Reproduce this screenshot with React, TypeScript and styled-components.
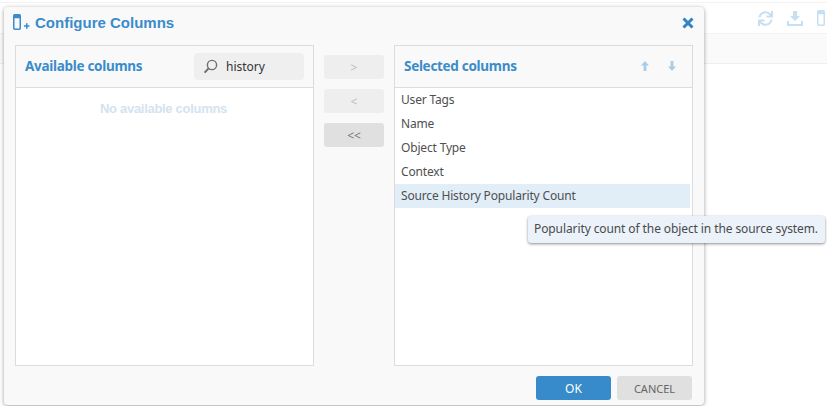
import React from 'react';
import styled, { createGlobalStyle } from 'styled-components';
import { FaSync } from 'react-icons/fa';

const selectedColumns = ['User Tags', 'Name', 'Object Type', 'Context', 'Source History Popularity Count'];

const GlobalStyle = createGlobalStyle`
  html, body {
    margin: 0;
    padding: 0;
    background: #fff;
  }
  body {
    font-family: 'Noto Sans', 'Open Sans', sans-serif;
    font-size: 12px;
    color: #4a4a4a;
  }
  * {
    box-sizing: border-box;
  }
`;

const Page = styled.div`
  position: relative;
  width: 827px;
  height: 406px;
  overflow: hidden;
  padding-top: 2px;
`;

const Toolbar = styled.div`
  display: flex;
  justify-content: flex-end;
  align-items: center;
  gap: 14px;
  height: 32px;
  border-top: 1px solid #f3f3f3;
  border-bottom: 1px solid #f3f3f3;
  padding: 0 2px 0 0;
  color: #c6dff2;
`;

const HeaderStrip = styled.div`
  height: 30px;
  background: #fafafa;
  border-bottom: 1px solid #eeeeee;
`;

const Modal = styled.div`
  position: absolute;
  left: 4px;
  top: 7px;
  width: 700px;
  height: 398px;
  background: #f9f9f9;
  border-radius: 4px;
  box-shadow: 0 1px 4px rgba(0, 0, 0, 0.38);
  padding: 0 11px;
  display: flex;
  flex-direction: column;
`;

const TitleRow = styled.div`
  height: 38px;
  display: flex;
  align-items: center;
  justify-content: space-between;
  padding: 0 0 8px 0;
  margin-left: -2px;
`;

const TitleGroup = styled.div`
  display: flex;
  align-items: center;
  gap: 5px;
`;

const Title = styled.h2`
  margin: 0;
  font-family: 'Liberation Sans', Arial, sans-serif;
  font-size: 15px;
  font-weight: 700;
  color: #3a8cca;
`;

const CloseIcon = styled.svg`
  width: 12px;
  height: 12px;
  margin-right: -1px;
  margin-top: 2px;
  color: #2f84c4;
`;

const Columns = styled.div`
  display: flex;
  align-items: stretch;
  height: 321px;
  width: 678px;
`;

const Panel = styled.section`
  width: 299px;
  border: 1px solid #dcdcdc;
  display: flex;
  flex-direction: column;
`;

const PanelHeader = styled.header`
  height: 42px;
  flex: none;
  display: flex;
  align-items: center;
  justify-content: space-between;
  border-bottom: 1px solid #dcdcdc;
  padding: 0 9px;
`;

const PanelTitle = styled.h3`
  margin: 0 0 2px;
  font-family: 'Noto Sans', sans-serif;
  font-size: 13.5px;
  font-weight: 700;
  letter-spacing: -0.3px;
  color: #3a8cca;
`;

const SearchBox = styled.div`
  width: 110px;
  height: 27px;
  border-radius: 4px;
  background: #efefef;
  display: flex;
  align-items: center;
  gap: 8px;
  padding-left: 9px;
  font-size: 12px;
  color: #333;
`;

const SortGroup = styled.div`
  display: flex;
  gap: 19px;
  padding: 0 7px 2px 0;
  color: #a9cde9;
`;

const PanelBody = styled.div`
  flex: 1;
  background: #fff;
  padding-right: 2px;
`;

const EmptyNote = styled.div`
  text-align: center;
  padding-top: 12px;
  font-family: 'Liberation Sans', Arial, sans-serif;
  font-size: 13px;
  font-weight: 700;
  letter-spacing: -0.3px;
  color: #d3e3f0;
  line-height: 17px;
`;

const ColumnRow = styled.div<{ $active?: boolean }>`
  height: 24px;
  line-height: 24px;
  padding-left: 6px;
  font-size: 12px;
  letter-spacing: -0.17px;
  color: #4f4f4f;
  background: ${(p) => (p.$active ? '#e1edf7' : 'transparent')};
`;

const MoveButtons = styled.div`
  width: 80px;
  display: flex;
  flex-direction: column;
  align-items: center;
  gap: 10px;
  padding-top: 10px;
`;

const MoveButton = styled.button<{ $enabled?: boolean }>`
  width: 60px;
  height: 24px;
  padding: 0;
  border: 0;
  border-radius: 3px;
  background: ${(p) => (p.$enabled ? '#e0e0e0' : '#eeeeee')};
  color: ${(p) => (p.$enabled ? '#777' : '#bdbdbd')};
  font-family: 'Noto Sans', sans-serif;
  font-size: 12px;
`;

const Footer = styled.footer`
  display: flex;
  justify-content: flex-end;
  gap: 6px;
  width: 677px;
  padding-top: 10px;
`;

const FooterButton = styled.button<{ $primary?: boolean }>`
  width: 75px;
  height: 24px;
  padding: 0;
  border: 0;
  border-radius: 3px;
  font-family: 'Noto Sans', sans-serif;
  font-size: ${(p) => (p.$primary ? 12 : 11)}px;
  background: ${(p) => (p.$primary ? '#378bca' : '#e0e0e0')};
  color: ${(p) => (p.$primary ? '#fff' : '#666')};
`;

const Tooltip = styled.div`
  position: absolute;
  left: 528px;
  top: 216px;
  width: 297px;
  height: 27px;
  line-height: 26px;
  padding-left: 6px;
  border-radius: 3px;
  background: #ebf2fa;
  box-shadow: 0 1px 3px rgba(0, 0, 0, 0.45);
  font-size: 12px;
  letter-spacing: -0.1px;
  white-space: nowrap;
  color: #4a4a4a;
`;

const ColumnsIcon = () => (
  <svg width="8" height="16" viewBox="0 0 8 16" fill="none">
    <rect x="0.75" y="0.75" width="6.5" height="14.5" rx="1" stroke="currentColor" strokeWidth="1.5" />
    <rect x="0.75" y="0.75" width="6.5" height="3.5" fill="currentColor" />
  </svg>
);

const TitleIcon = () => (
  <svg width="17" height="16" viewBox="0 0 17 16" fill="none" color="#3a8cca">
    <rect x="0.75" y="0.75" width="6.5" height="14.5" rx="1" stroke="currentColor" strokeWidth="1.5" />
    <rect x="0.75" y="0.75" width="6.5" height="3.5" fill="currentColor" />
    <path d="M11 12h5.5M13.75 9.2v5.6" stroke="currentColor" strokeWidth="1.6" />
  </svg>
);

const SearchIcon = () => (
  <svg width="15" height="15" viewBox="0 0 15 15" fill="none" stroke="#6d6d6d">
    <circle cx="9" cy="6" r="4.6" strokeWidth="1.4" />
    <path d="M5.6 9.4 1.6 13.6" strokeWidth="2" />
  </svg>
);

const ArrowUp = () => (
  <svg width="8" height="10" viewBox="0 0 8 10" fill="currentColor">
    <path d="M4 0 8 4.6H5.4V10H2.6V4.6H0Z" />
  </svg>
);

const ArrowDown = () => (
  <svg width="8" height="10" viewBox="0 0 8 10" fill="currentColor">
    <path d="M4 10 0 5.4H2.6V0H5.4V5.4H8Z" />
  </svg>
);

const DownloadIcon = () => (
  <svg width="16" height="15" viewBox="0 0 16 15" fill="currentColor">
    <path d="M6 0h4v5h3l-5 5-5-5h3Z" />
    <path d="M0 10h2v3h12v-3h2v5H0Z" />
  </svg>
);

export default function App() {
  return (
    <Page>
      <GlobalStyle />
      <Toolbar>
        <FaSync size={15} />
        <DownloadIcon />
        <ColumnsIcon />
      </Toolbar>
      <HeaderStrip />
      <Modal>
        <TitleRow>
          <TitleGroup>
            <TitleIcon />
            <Title>Configure Columns</Title>
          </TitleGroup>
          <CloseIcon viewBox="0 0 12 12">
            <path d="M1.5 1.5 10.5 10.5M10.5 1.5 1.5 10.5" stroke="currentColor" strokeWidth="3" />
          </CloseIcon>
        </TitleRow>
        <Columns>
          <Panel>
            <PanelHeader>
              <PanelTitle>Available columns</PanelTitle>
              <SearchBox>
                <SearchIcon />
                history
              </SearchBox>
            </PanelHeader>
            <PanelBody>
              <EmptyNote>No available columns</EmptyNote>
            </PanelBody>
          </Panel>
          <MoveButtons>
            <MoveButton>&gt;</MoveButton>
            <MoveButton>&lt;</MoveButton>
            <MoveButton $enabled>&lt;&lt;</MoveButton>
          </MoveButtons>
          <Panel>
            <PanelHeader>
              <PanelTitle>Selected columns</PanelTitle>
              <SortGroup>
                <ArrowUp />
                <ArrowDown />
              </SortGroup>
            </PanelHeader>
            <PanelBody>
              {selectedColumns.map((name, i) => (
                <ColumnRow key={name} $active={i === selectedColumns.length - 1}>
                  {name}
                </ColumnRow>
              ))}
            </PanelBody>
          </Panel>
        </Columns>
        <Footer>
          <FooterButton $primary>OK</FooterButton>
          <FooterButton>CANCEL</FooterButton>
        </Footer>
      </Modal>
      <Tooltip>Popularity count of the object in the source system.</Tooltip>
    </Page>
  );
}
